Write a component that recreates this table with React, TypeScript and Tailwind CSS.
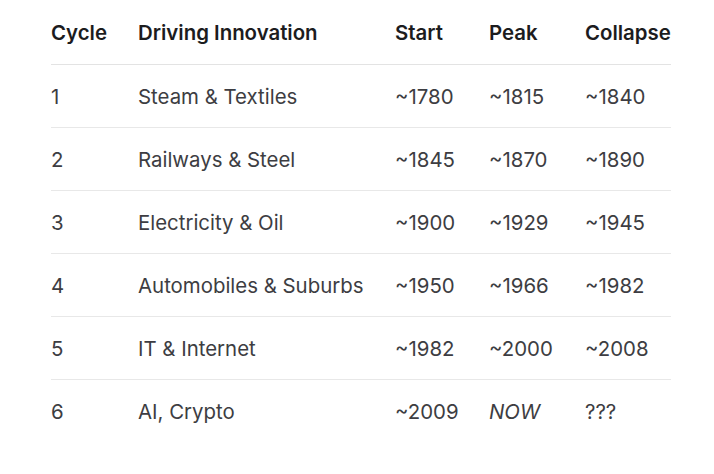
import React from 'react';

const rows = [
  ['1', 'Steam & Textiles', '~1780', '~1815', '~1840'],
  ['2', 'Railways & Steel', '~1845', '~1870', '~1890'],
  ['3', 'Electricity & Oil', '~1900', '~1929', '~1945'],
  ['4', 'Automobiles & Suburbs', '~1950', '~1966', '~1982'],
  ['5', 'IT & Internet', '~1982', '~2000', '~2008'],
  ['6', 'AI, Crypto', '~2009', 'NOW', '???'],
];

export default function App() {
  return (
    <div className="w-[714px] h-[474px] bg-white pl-[51px] pt-[2px]" style={{ fontFamily: 'Inter, sans-serif' }}>
      <table className="w-[620px] border-collapse text-[20.4px]">
        <colgroup>
          <col className="w-[87px]" />
          <col className="w-[257px]" />
          <col className="w-[94px]" />
          <col className="w-[96px]" />
          <col className="w-[86px]" />
        </colgroup>
        <thead>
          <tr className="h-[62px] border-b border-[#e3e3e3]">
            {['Cycle', 'Driving Innovation', 'Start', 'Peak', 'Collapse'].map((h) => (
              <th key={h} className="text-left font-semibold text-[#1c1c1e] p-0 pt-[2px] whitespace-nowrap">
                {h}
              </th>
            ))}
          </tr>
        </thead>
        <tbody>
          {rows.map((r, i) => (
            <tr key={r[0]} className={`h-[63px] ${i < rows.length - 1 ? 'border-b border-[#e8e8e8]' : ''}`}>
              {r.map((c, j) => (
                <td
                  key={j}
                  className={`p-0 pt-[3px] whitespace-nowrap text-[#3d3d42] ${c === 'NOW' ? 'italic' : ''}`}
                >
                  {c}
                </td>
              ))}
            </tr>
          ))}
        </tbody>
      </table>
    </div>
  );
}
